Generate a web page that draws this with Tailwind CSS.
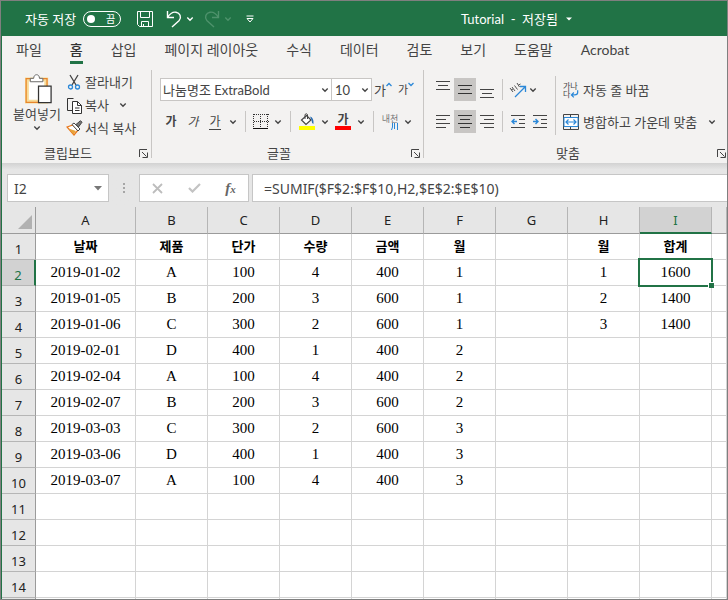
<!DOCTYPE html>
<html lang="ko">
<head>
<meta charset="utf-8">
<meta name="viewport" content="width=device-width, initial-scale=1">
<title>Tutorial - Excel</title>
<script src="https://cdn.jsdelivr.net/npm/@tailwindcss/browser@4"></script>
</head>
<body class="bg-white">
<svg class="hidden" aria-hidden="true">
  <symbol id="chev" viewBox="0 0 8 8"><path d="M1.3 2.6 4 5.2 6.7 2.6" fill="none" stroke="currentColor" stroke-width="1.4"/></symbol>
  <symbol id="launch" viewBox="0 0 9 9"><path d="M.5 8V.5H8M3 3l4.5 4.5M8.5 3.5v5h-5" fill="none" stroke="currentColor"/></symbol>
</svg>
<div class="flex h-screen flex-col overflow-hidden border border-[#7f7f7f] font-['Lato','Noto_Sans_CJK_KR',sans-serif] text-[13px] text-[#444]">
<div class="flex min-h-0 flex-1 flex-col border-l border-[#217346]">

<header class="flex h-[35px] shrink-0 items-center bg-[#217346] pl-[23px] text-white">
  <label for="autosave" class="leading-5">자동 저장</label>
  <button id="autosave" role="switch" aria-checked="false" class="ml-[7px] flex h-4 w-[38px] items-center justify-between rounded-full border border-white pr-[5px] pl-[3px] text-[10px] leading-3"><span class="size-2 rounded-full bg-white"></span>끔</button>
  <button aria-label="저장" class="ml-4"><svg class="size-4" viewBox="0 0 16 16" fill="none" stroke="currentColor"><path d="M.5.5h15v15h-13l-2-2zM3.5.5v6h9v-6M4.5 15.500v-5h7v5M6.500 13v2.500"/></svg></button>
  <button aria-label="실행 취소" class="ml-[13px]"><svg class="h-[18px] w-4" viewBox="0 0 16 18" fill="none" stroke="currentColor" stroke-width="1.400"><path d="M1.500 1v6.500H8M1.500 7.500C4 3.500 7 1.700 10 2.200c4 .6 5.800 5 3.200 8.200L6 17"/></svg></button>
  <button aria-label="실행 취소 목록" class="ml-1"><svg class="size-2"><use href="#chev"/></svg></button>
  <button aria-label="다시 실행" class="ml-[10px] text-[#4e926c]"><svg class="h-[18px] w-4" viewBox="0 0 16 18" fill="none" stroke="currentColor" stroke-width="1.400"><path d="M14.500 1v6.500H8M14.500 7.500C12 3.500 9 1.700 6 2.200 2 2.800.2 7.200 2.800 10.400L10 17"/></svg></button>
  <button aria-label="다시 실행 목록" class="ml-1 text-[#4e926c]"><svg class="size-2"><use href="#chev"/></svg></button>
  <button aria-label="빠른 실행 도구 모음 사용자 지정" class="ml-[14px]"><svg class="size-2" viewBox="0 0 8 8"><path d="M.5 1h7" stroke="currentColor"/><path d="M1 3.500h6L4 7z" fill="none" stroke="currentColor"/></svg></button>
  <button class="mr-[155px] ml-auto flex items-center gap-2 leading-5"><span>Tutorial&nbsp; -&nbsp; 저장됨</span><svg class="h-1 w-[6px]" viewBox="0 0 6 4"><path d="M0 .5h6L3 3.500z" fill="currentColor"/></svg></button>
</header>

<nav class="flex h-[30px] shrink-0 items-start gap-7 bg-[#f3f2f1] pl-[14px] text-[14px] leading-[28px] whitespace-nowrap">
  <a href="#">파일</a>
  <a href="#" aria-current="page" class="flex flex-col text-[#333]"><b class="font-medium">홈</b><span class="-mt-[3px] h-[3px] bg-[#217346]"></span></a>
  <a href="#">삽입</a><a href="#">페이지 레이아웃</a><a href="#">수식</a><a href="#">데이터</a><a href="#">검토</a><a href="#">보기</a><a href="#">도움말</a><a href="#">Acrobat</a>
</nav>

<section class="flex h-[97px] shrink-0 bg-[#f3f2f1] pt-1 leading-5 whitespace-nowrap">
  <div class="flex w-[149px] shrink-0 flex-col">
    <div class="flex h-[75px]">
      <button class="flex w-[62px] flex-col items-center pt-1 pl-2">
        <svg class="mr-px ml-1 h-[30px] w-7" viewBox="0 0 28 31" fill="none"><path d="M1.500 5.500h20v23h-20z" fill="#fff" stroke="#f8dc98" stroke-width="4"/><path d="M.7 4.700h21.600v24.600H.7z" stroke="#e8852c" stroke-width="1.300"/><path d="M5 8V4.500h3.500c0-5 6-5 6 0H18V8z" fill="#fff" stroke="#666"/><path d="M13.500 12.500h13v17h-13z" fill="#fff" stroke="#333" stroke-width="1.300"/></svg>
        <span>붙여넣기</span><svg class="size-2"><use href="#chev"/></svg>
      </button>
      <div class="flex flex-col gap-[3px] pt-[2px] pl-[2px]">
        <button class="flex items-center gap-[3px]"><svg class="h-4 w-4" viewBox="0 0 16 16" fill="none"><path d="M4 1l6 10M12 1 6 11" stroke="#444" stroke-width="1.300"/><circle cx="4.500" cy="13" r="2" stroke="#2b88d8" stroke-width="1.300"/><circle cx="11.500" cy="13" r="2" stroke="#2b88d8" stroke-width="1.300"/></svg>잘라내기</button>
        <div class="flex items-center"><button class="flex items-center gap-[2px]"><svg class="h-[17px] w-[17px]" viewBox="0 0 17 17" fill="none" stroke="#333"><path d="M6 13.500H1.500V1.500h6"/><path d="M6.500 4.500h5l4 4v8h-9z" fill="#fff"/><path d="M11.500 4.500v4h4M9 11h4.500M9 13.500h4.500"/></svg>복사</button><button aria-label="복사 옵션" class="ml-[10px]"><svg class="size-2"><use href="#chev"/></svg></button></div>
        <button class="flex items-center gap-[2px]"><svg class="h-4 w-[17px]" viewBox="0 0 17 16"><path d="M1 7l6-2 5 5-4 5z" fill="#fff" stroke="#e8761a" stroke-width="1.300"/><path d="M2.500 8.500 10 11l-2.500 3.500z" fill="#e8a33a"/><path d="M6 4.500 8 3l6 6-2 2z" fill="#fff" stroke="#444"/><path d="M10 4.500 14.500.7l1.500 1.500L12.500 7z" fill="#777" stroke="#444"/></svg>서식 복사</button>
      </div>
    </div>
    <div class="flex items-center pr-[3px] pl-[42px]"><span>클립보드</span><button aria-label="클립보드 설정" class="ml-auto"><svg class="size-[9px]"><use href="#launch"/></svg></button></div>
  </div>
  <div class="h-[88px] w-px shrink-0 bg-[#c8c6c4]"></div>

  <div class="flex w-[271px] shrink-0 flex-col">
    <div class="flex h-[75px] flex-col gap-[9px] pt-2 pl-2">
      <div class="flex h-[23px] items-center">
        <div class="relative flex h-full w-[172px] items-center border border-[#c8c6c4] bg-white"><select aria-label="글꼴" class="h-full w-full appearance-none pl-[2px]"><option>나눔명조 ExtraBold</option></select><svg class="pointer-events-none absolute right-[2px] size-2"><use href="#chev"/></svg></div>
        <div class="relative flex h-full w-10 items-center border border-l-0 border-[#c8c6c4] bg-white"><select aria-label="글꼴 크기" class="h-full w-full appearance-none pl-[3px]"><option>10</option></select><svg class="pointer-events-none absolute right-[2px] size-2"><use href="#chev"/></svg></div>
        <button aria-label="글꼴 크기 크게" class="ml-[2px] flex w-6 items-start"><span class="text-[13px] leading-5">가</span><svg class="mt-[2px] h-[5px] w-[6px]" viewBox="0 0 6 5"><path d="M.5 4 3 1.500 5.500 4" fill="none" stroke="#2b88d8" stroke-width="1.300"/></svg></button>
        <button aria-label="글꼴 크기 작게" class="flex items-start"><span class="text-[11px] leading-5">가</span><svg class="mt-[2px] h-[5px] w-[6px]" viewBox="0 0 6 5"><path d="M.5 1 3 3.500 5.500 1" fill="none" stroke="#2b88d8" stroke-width="1.300"/></svg></button>
      </div>
      <div class="flex h-[23px] items-center text-[12px]">
        <button aria-label="굵게" class="w-[22px] font-bold">가</button>
        <button aria-label="기울임꼴" class="w-[22px] italic">가</button>
        <button aria-label="밑줄" class="flex w-[22px] justify-center"><span class="border-b border-[#444] leading-[15px]">가</span></button>
        <button aria-label="밑줄 옵션" class="flex w-[14px] justify-center"><svg class="size-2"><use href="#chev"/></svg></button>
        <div class="mx-[5px] h-[21px] w-px bg-[#c8c6c4]"></div>
        <button aria-label="테두리" class="flex w-5 justify-center"><svg class="size-4" viewBox="0 0 16 16" fill="none" stroke="#333"><path d="M.5.5h15M.5 7.500h15M.5 0v14M7.500 0v14M14.500 0v14" stroke-dasharray="1 1" shape-rendering="crispEdges"/><path d="M0 14.500h15" stroke="#111" shape-rendering="crispEdges"/></svg></button>
        <button aria-label="테두리 옵션" class="flex w-[14px] justify-center"><svg class="size-2"><use href="#chev"/></svg></button>
        <div class="mx-[5px] h-[21px] w-px bg-[#c8c6c4]"></div>
        <button aria-label="채우기 색" class="flex w-[22px] justify-center"><svg class="h-[17px] w-4" viewBox="0 0 16 17"><path d="M0 13h16v4H0z" fill="#ff0"/><path d="M7.500 2.500 12 7l-5 4.500L2.500 7z" fill="#fff" stroke="#444" stroke-width="1.200"/><path d="M6 6V1.500q1.500-1.500 2.500 0V6" fill="none" stroke="#444"/><path d="M11 3.500q4 1 3.500 7.500-2-1-2-4z" fill="#2b6fb5"/></svg></button>
        <button aria-label="채우기 색 옵션" class="flex w-[14px] justify-center"><svg class="size-2"><use href="#chev"/></svg></button>
        <button aria-label="글꼴 색" class="flex w-[22px] flex-col items-center"><span class="leading-[13px] font-bold">가</span><span class="h-1 w-4 bg-[red]"></span></button>
        <button aria-label="글꼴 색 옵션" class="flex w-[14px] justify-center"><svg class="size-2"><use href="#chev"/></svg></button>
        <div class="mx-[5px] h-[21px] w-px bg-[#c8c6c4]"></div>
        <button aria-label="윗주 필드" class="flex w-[22px] flex-col items-center text-[9px] leading-[9px] text-[#777]"><span>내천</span><svg class="mr-[3px] h-[7px] w-[7px] self-end" viewBox="0 0 7 7" fill="none" stroke="#2b88d8"><path d="M1.500 0v4L.5 7M3.500 0v6M6.500 0v7"/></svg></button>
        <button aria-label="윗주 옵션" class="flex w-[14px] justify-center"><svg class="size-2"><use href="#chev"/></svg></button>
      </div>
    </div>
    <div class="flex items-center pr-[3px] pl-[115px]"><span>글꼴</span><button aria-label="글꼴 설정" class="ml-auto"><svg class="size-[9px]"><use href="#launch"/></svg></button></div>
  </div>
  <div class="h-[88px] w-px shrink-0 bg-[#c8c6c4]"></div>

  <div class="flex min-w-0 flex-1 flex-col">
    <div class="flex h-[75px] pl-2">
      <div class="flex flex-col gap-[9px] pt-2">
        <div class="flex h-[23px] items-center">
          <button aria-label="위쪽 맞춤" class="flex h-full w-[22px] items-center justify-center"><svg class="h-[18px] w-[14px]" viewBox="0 0 14 18" stroke="#444"><path d="M0 .5h14M2 4.500h10M0 8.500h14"/></svg></button>
          <button aria-label="가운데 맞춤" aria-pressed="true" class="flex h-full w-[22px] items-center justify-center bg-[#c8c6c4]"><svg class="h-[18px] w-[14px]" viewBox="0 0 14 18" stroke="#333"><path d="M0 4.500h14M2 8.500h10M0 12.500h14"/></svg></button>
          <button aria-label="아래쪽 맞춤" class="flex h-full w-[22px] items-center justify-center"><svg class="h-[18px] w-[14px]" viewBox="0 0 14 18" stroke="#444"><path d="M0 8.500h14M2 12.500h10M0 16.500h14"/></svg></button>
          <div class="mx-1 h-[21px] w-px bg-[#c8c6c4]"></div>
          <button aria-label="방향" class="flex w-[22px] justify-center"><svg class="h-4 w-[18px]" viewBox="0 0 18 16" fill="none"><path d="M6 15 16 5M11 4.500h5.500V10" stroke="#2b88d8" stroke-width="1.300"/><path d="M1 6l3 4M3 5l3 4M5.500 3.500l3 4M2 8l2-1M8 1l2.500 4M9.500 3l2-1" stroke="#555"/></svg></button>
          <button aria-label="방향 옵션" class="flex w-2 justify-center"><svg class="size-2"><use href="#chev"/></svg></button>
        </div>
        <div class="flex h-[23px] items-center">
          <button aria-label="왼쪽 맞춤" class="flex h-full w-[22px] items-center justify-center"><svg class="h-[14px] w-[14px]" viewBox="0 0 14 14" stroke="#444"><path d="M0 .5h14M0 4.500h10M0 8.500h14M0 12.500h10"/></svg></button>
          <button aria-label="가로 가운데 맞춤" aria-pressed="true" class="flex h-full w-[22px] items-center justify-center bg-[#c8c6c4]"><svg class="h-[14px] w-[14px]" viewBox="0 0 14 14" stroke="#333"><path d="M0 .5h14M2 4.500h10M0 8.500h14M2 12.500h10"/></svg></button>
          <button aria-label="오른쪽 맞춤" class="flex h-full w-[22px] items-center justify-center"><svg class="h-[14px] w-[14px]" viewBox="0 0 14 14" stroke="#444"><path d="M0 .5h14M4 4.500h10M0 8.500h14M4 12.500h10"/></svg></button>
          <div class="mx-1 h-[21px] w-px bg-[#c8c6c4]"></div>
          <button aria-label="내어쓰기" class="flex w-[22px] justify-center"><svg class="h-[14px] w-[14px]" viewBox="0 0 14 14" fill="none" stroke="#444"><path d="M0 .5h14M8 4.500h6M8 8.500h6M0 12.500h14"/><path d="M6 6.500H1M3.500 4 1 6.500 3.500 9" stroke="#2b88d8" stroke-width="1.400"/></svg></button>
          <button aria-label="들여쓰기" class="flex w-[22px] justify-center"><svg class="h-[14px] w-[14px]" viewBox="0 0 14 14" fill="none" stroke="#444"><path d="M0 .5h14M8 4.500h6M8 8.500h6M0 12.500h14"/><path d="M0 6.500h5M2.500 4 5 6.500 2.500 9" stroke="#2b88d8" stroke-width="1.400"/></svg></button>
        </div>
      </div>
      <div class="mt-[6px] ml-1 h-[59px] w-px bg-[#c8c6c4]"></div>
      <div class="flex min-w-0 flex-1 flex-col gap-[9px] pt-2 pl-[7px]">
        <button class="flex h-[23px] items-center gap-1 self-start"><span class="flex w-4 flex-col text-left text-[8px] leading-[8px]"><span>가나</span><span class="flex">다<svg class="h-2 w-[9px]" viewBox="0 0 9 8"><path d="M8 0v2.500Q8 5 5 5H1.500M4 2.500 1.500 5 4 7.500" fill="none" stroke="#2b88d8" stroke-width="1.300"/></svg></span></span>자동 줄 바꿈</button>
        <div class="flex h-[23px] items-center"><button class="flex items-center gap-1"><svg class="size-4" viewBox="0 0 16 16" fill="none"><path d="M.5.5h15v15H.5zM7.500 0v3M7.500 13v3" stroke="#444"/><path d="M1 3.500h14v9H1z" fill="#fff" stroke="#2b88d8"/><path d="M3 8h10M5.500 5.500 3 8l2.500 2.500M10.500 5.500 13 8l-2.500 2.500" stroke="#2b88d8" stroke-width="1.200"/></svg>병합하고 가운데 맞춤</button><button aria-label="병합 옵션" class="mr-[11px] ml-auto"><svg class="size-2"><use href="#chev"/></svg></button></div>
      </div>
    </div>
    <div class="flex items-center pr-[1px] pl-[132px]"><span>맞춤</span><button aria-label="맞춤 설정" class="ml-auto"><svg class="size-[9px]"><use href="#launch"/></svg></button></div>
  </div>
</section>

<section class="flex h-[44px] shrink-0 bg-[#e6e6e6] bg-linear-to-b from-[#d2d2d2] to-[#e6e6e6] to-15% pt-[11px] pl-[5px] font-['Noto_Sans','Noto_Sans_CJK_KR',sans-serif] text-[14px]">
  <div class="relative flex h-7 w-[102px] items-center border border-[#c6c6c6] bg-white"><input aria-label="이름 상자" value="I2" class="w-full pl-[6px] outline-none"><svg class="absolute right-[6px] h-[5px] w-2" viewBox="0 0 8 5"><path d="M0 0h8L4 4.500z" fill="#777"/></svg></div>
  <div class="flex h-7 w-[30px] items-center justify-center"><svg class="h-[10px] w-[2px]" viewBox="0 0 2 10"><path d="M0 0h2v2H0zM0 4h2v2H0zM0 8h2v2H0z" fill="#a6a6a6"/></svg></div>
  <div class="flex h-7 w-[110px] items-center justify-around border border-[#c6c6c6] bg-white">
    <button aria-label="취소"><svg class="size-[11px]" viewBox="0 0 11 11"><path d="M1 1l9 9M10 1l-9 9" stroke="#bdbdbd" stroke-width="1.800"/></svg></button>
    <button aria-label="입력"><svg class="h-[10px] w-[13px]" viewBox="0 0 13 10"><path d="M1 5l3.500 3.500L12 1" fill="none" stroke="#c3c3c3" stroke-width="2.200"/></svg></button>
    <button aria-label="함수 삽입" class="font-['Liberation_Serif',serif] text-[15px] leading-4 font-bold text-[#666] italic">f<span class="text-[11px]">x</span></button>
  </div>
  <input aria-label="수식 입력줄" value="=SUMIF($F$2:$F$10,H2,$E$2:$E$10)" class="ml-[3px] h-7 min-w-0 flex-1 border border-r-0 border-[#c6c6c6] bg-white pl-[11px] outline-none">
</section>

<main class="min-h-0 flex-1 overflow-hidden bg-white">
  <table class="w-full table-fixed border-separate border-spacing-0 text-center font-['Noto_Sans',sans-serif] text-[13px] text-black">
    <colgroup><col class="w-[34px]"><col class="w-[100px]"><col class="w-[72px]"><col class="w-[72px]"><col class="w-[72px]"><col class="w-[72px]"><col class="w-[72px]"><col class="w-[72px]"><col class="w-[72px]"><col class="w-[72px]"><col></colgroup>
    <thead><tr id="letters"></tr></thead>
    <tbody id="rows"></tbody>
  </table>
</main>
</div>
</div>
<script>
const head = 'h-[27px] border-r border-b border-[#9b9b9b] border-r-[#b5b5b5] bg-[#e6e6e6] p-0 leading-5 font-normal text-[#222]';
const headOn = 'h-[27px] border-r border-b-2 border-b-[#217346] border-r-[#b5b5b5] bg-[#d2d2d2] p-0 leading-5 font-normal text-[#217346]';
const num = 'h-[26px] border-r border-b border-[#b5b5b5] border-r-[#9b9b9b] bg-[#e6e6e6] p-0 pt-1 leading-5 font-normal text-[#222]';
const numOn = 'h-[26px] border-r-2 border-b border-[#b5b5b5] border-r-[#217346] bg-[#d2d2d2] p-0 pt-1 leading-5 font-normal text-[#217346]';
const cell = "h-[26px] border-r border-b border-[#d4d4d4] p-0 pb-[2px] font-['Liberation_Serif',serif] text-[15px] leading-5";
const title = "h-[26px] border-r border-b border-[#d4d4d4] p-0 pb-[2px] font-['Noto_Sans_CJK_KR',sans-serif] leading-5 font-bold";
const corner = '<th class="border-r border-b border-[#9b9b9b] bg-[#e6e6e6] p-0"><svg class="mt-1 ml-4 size-[14px]" viewBox="0 0 14 14"><path d="M14 0v14H0z" fill="#b1b1b1"/></svg></th>';
document.getElementById('letters').innerHTML = corner + [...'ABCDEFGHI', ''].map(c => `<th scope="col" class="${c === 'I' ? headOn : head}">${c}</th>`).join('');
const data = [
  ['날짜','제품','단가','수량','금액','월','','월','합계'],
  ['2019-01-02','A',100,4,400,1,'',1,1600],
  ['2019-01-05','B',200,3,600,1,'',2,1400],
  ['2019-01-06','C',300,2,600,1,'',3,1400],
  ['2019-02-01','D',400,1,400,2],
  ['2019-02-04','A',100,4,400,2],
  ['2019-02-07','B',200,3,600,2],
  ['2019-03-03','C',300,2,600,3],
  ['2019-03-06','D',400,1,400,3],
  ['2019-03-07','A',100,4,400,3]
];
const selection = '<span class="pointer-events-none absolute -top-[2px] -right-[2px] -bottom-[4px] -left-[2px] border-2 border-[#217346]"></span><span class="absolute -right-[3px] -bottom-[5px] size-[6px] border-t border-l border-white bg-[#217346]"></span>';
const lastNumbered = 14;
let html = '';
for (let r = 0; r <= lastNumbered; r++) {
  html += `<tr><th scope="row" class="${r === 1 ? numOn : num}">${r < lastNumbered ? r + 1 : ''}</th>`;
  for (let c = 0; c < 10; c++) {
    const v = (data[r] || [])[c] ?? '';
    const on = r === 1 && c === 8;
    html += `<td class="${r === 0 ? title : cell}">${on ? `<div class="relative flex h-[23px] items-center justify-center">${v}${selection}</div>` : v}</td>`;
  }
  html += '</tr>';
}
document.getElementById('rows').innerHTML = html;
</script>
</body>
</html>
